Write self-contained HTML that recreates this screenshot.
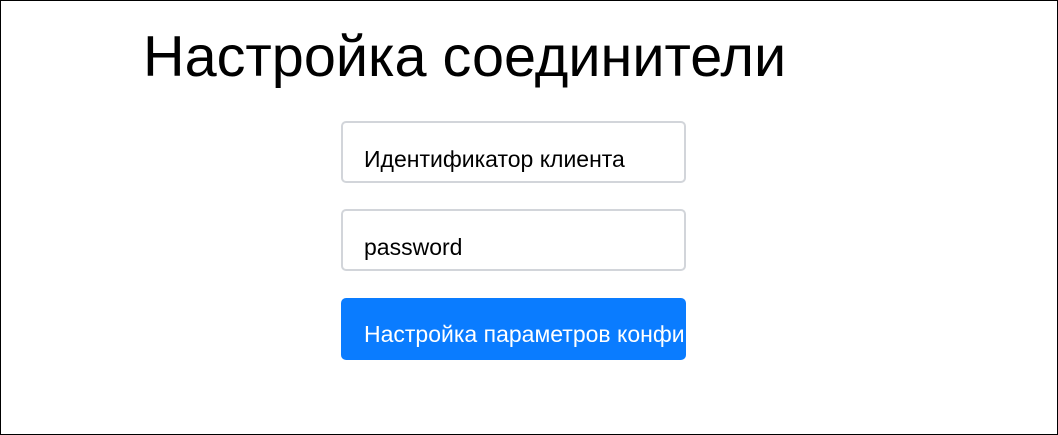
<!DOCTYPE html>
<html><head><meta charset="utf-8"><style>
html,body{margin:0;padding:0;background:#fff}
body{width:1058px;height:435px;position:relative;overflow:hidden;font-family:"Liberation Sans",sans-serif}
.frame{position:absolute;left:0;top:0;width:1056px;height:433px;border:1px solid #000}
h1{position:absolute;left:143px;top:22px;margin:0;font-weight:normal;font-size:57.6px;line-height:70px;color:#000;white-space:nowrap}
.in{position:absolute;left:341px;width:341px;height:58px;border:2px solid #d2d5da;border-radius:5px;box-sizing:content-box}
.in span{position:absolute;left:21px;top:23px;font-size:23px;line-height:26px;color:#000;white-space:nowrap}
.btn{position:absolute;left:341px;top:298px;width:345px;height:62px;background:#0a7cff;border-radius:5px;overflow:hidden}
.btn span{position:absolute;left:23px;top:23px;font-size:23px;line-height:26px;color:#fff;white-space:nowrap}
</style></head><body>
<div class="frame"></div>
<h1>Настройка соединители</h1>
<div class="in" style="top:121px"><span>Идентификатор клиента</span></div>
<div class="in" style="top:209px"><span>password</span></div>
<div class="btn"><span>Настройка параметров конфигурации</span></div>
</body></html>
